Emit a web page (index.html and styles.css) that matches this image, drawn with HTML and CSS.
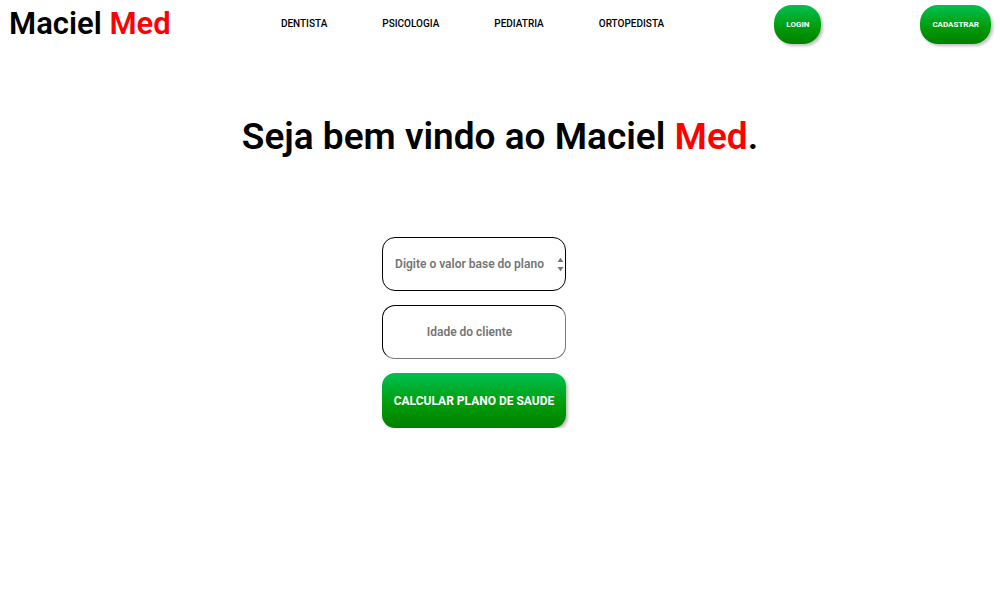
FILE: index.html
```html
<!DOCTYPE html>
<html lang="pt-br">
<head>
<meta charset="utf-8">
<title>Maciel Med</title>
<link rel="stylesheet" href="styles.css">
</head>
<body>
<header class="topbar">
  <a class="logo" href="#">Maciel <span class="accent">Med</span></a>
  <nav class="menu">
    <a href="#">DENTISTA</a>
    <a href="#">PSICOLOGIA</a>
    <a href="#">PEDIATRIA</a>
    <a href="#">ORTOPEDISTA</a>
  </nav>
  <div class="account">
    <button class="btn pill" type="button">LOGIN</button>
    <button class="btn pill" type="button">CADASTRAR</button>
  </div>
</header>
<main class="content">
  <h1 class="title">Seja bem vindo ao Maciel <span class="accent">Med</span>.</h1>
  <form class="plan">
    <div class="field">
      <input class="box strong" type="number" placeholder="Digite o valor base do plano" aria-label="Digite o valor base do plano">
      <svg class="spinner" width="7" height="15" viewBox="0 0 7 15" aria-hidden="true"><path d="M.5 5 3.5 .8 6.5 5ZM.5 10 3.5 14.2 6.5 10Z" fill="#777"/></svg>
    </div>
    <div class="field">
      <input class="box" type="number" placeholder="Idade do cliente" aria-label="Idade do cliente">
    </div>
    <button class="btn submit" type="button">CALCULAR PLANO DE SAUDE</button>
  </form>
</main>
</body>
</html>
```
FILE: styles.css
```css
* {
  box-sizing: border-box;
}

body {
  margin: 0;
  background: #fff;
  color: #000;
  font-family: Roboto, "Liberation Sans", sans-serif;
}

a {
  color: inherit;
  text-decoration: none;
}

.accent {
  color: #f00;
}

.topbar {
  display: flex;
  align-items: center;
  justify-content: space-between;
  padding: 4px 9px;
}

.logo {
  font-size: 31px;
  line-height: 40px;
  font-weight: 600;
}

.menu {
  display: flex;
  gap: 55px;
  font-size: 10px;
  line-height: 16px;
  font-weight: 500;
}

.account {
  display: flex;
  gap: 99px;
}

.btn {
  border: 0;
  color: #fff;
  font-family: inherit;
  font-weight: 700;
  background: linear-gradient(#00c050, #009a08 60%, #008000);
  box-shadow: 2px 2px 3px rgba(0, 0, 0, 0.25);
  cursor: pointer;
}

.pill {
  height: 39px;
  padding: 0 12px;
  border-radius: 18px;
  font-size: 8px;
}

.content {
  display: flex;
  flex-direction: column;
  align-items: center;
  gap: 76px;
  padding-top: 65px;
}

.title {
  margin: 0;
  font-size: 37px;
  line-height: 48px;
  font-weight: 600;
  text-align: center;
}

.plan {
  display: flex;
  flex-direction: column;
  gap: 14px;
  width: 184px;
  margin-right: 52px;
}

.field {
  position: relative;
  display: flex;
}

.box {
  width: 100%;
  height: 54px;
  padding: 0 16px 0 7px;
  border: 1px solid;
  border-color: #000 #777 #777 #000;
  border-radius: 13px;
  background: #fff;
  font-family: inherit;
  font-size: 12px;
  font-weight: 600;
  text-align: center;
  appearance: textfield;
}

.box::-webkit-inner-spin-button {
  appearance: none;
  margin: 0;
}

.strong {
  border-color: #000;
}

.box::placeholder {
  color: #757575;
}

.spinner {
  position: absolute;
  top: 20px;
  right: 2px;
}

.submit {
  height: 55px;
  padding: 0;
  border-radius: 13px;
  font-size: 12px;
  white-space: nowrap;
}
```
